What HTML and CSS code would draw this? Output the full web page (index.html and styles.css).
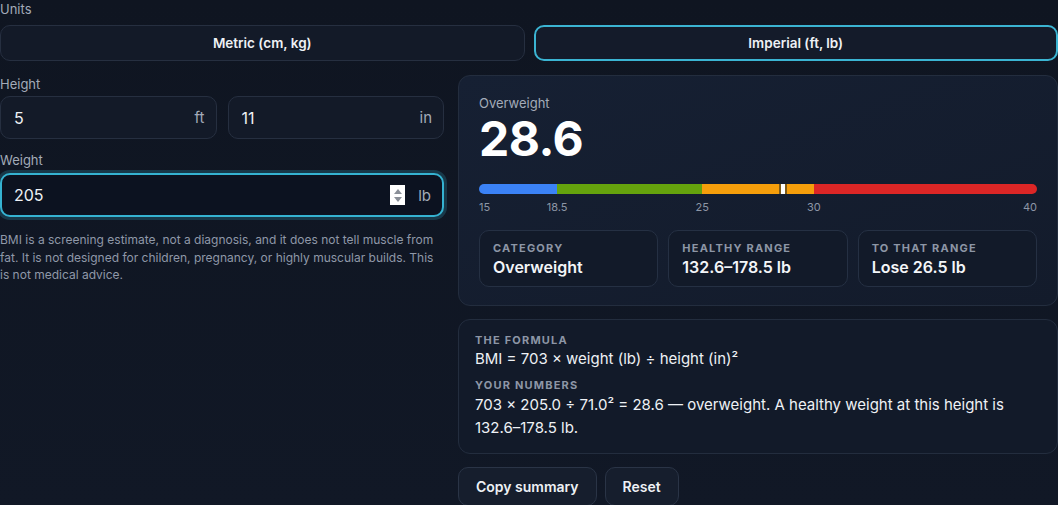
FILE: index.html
```html
<!DOCTYPE html>
<html lang="en">
<head>
<meta charset="utf-8">
<title>BMI Calculator</title>
<link rel="stylesheet" href="styles.css">
</head>
<body>
<div class="app">
  <div class="field-label">Units</div>
  <div class="units">
    <button class="unit-btn">Metric (cm, kg)</button>
    <button class="unit-btn active">Imperial (ft, lb)</button>
  </div>

  <div class="main">
    <div class="inputs">
      <div class="field-label">Height</div>
      <div class="pair">
        <div class="input"><span class="val">5</span><span class="suffix">ft</span></div>
        <div class="input"><span class="val">11</span><span class="suffix">in</span></div>
      </div>
      <div class="field-label weight-label">Weight</div>
      <div class="input focused">
        <span class="val">205</span>
        <span class="spinner"><span class="up"></span><span class="down"></span></span>
        <span class="suffix">lb</span>
      </div>
      <p class="note">BMI is a screening estimate, not a diagnosis, and it does not tell muscle from fat. It is not designed for children, pregnancy, or highly muscular builds. This is not medical advice.</p>
    </div>

    <div class="results">
      <section class="card result">
        <div class="cat-label">Overweight</div>
        <div class="bmi">28.6</div>
        <div class="scale">
          <div class="bar">
            <span class="seg blue"></span>
            <span class="seg green"></span>
            <span class="seg orange"></span>
            <span class="seg red"></span>
            <span class="marker" style="left:54.4%"></span>
          </div>
          <div class="ticks">
            <span class="tick first" style="left:0%">15</span>
            <span class="tick" style="left:14%">18.5</span>
            <span class="tick" style="left:40%">25</span>
            <span class="tick" style="left:60%">30</span>
            <span class="tick last" style="left:100%">40</span>
          </div>
        </div>
        <div class="stats">
          <div class="stat"><div class="stat-label">Category</div><div class="stat-value">Overweight</div></div>
          <div class="stat"><div class="stat-label">Healthy range</div><div class="stat-value">132.6–178.5 lb</div></div>
          <div class="stat"><div class="stat-label">To that range</div><div class="stat-value">Lose 26.5 lb</div></div>
        </div>
      </section>

      <section class="card formula">
        <div class="stat-label">The formula</div>
        <div class="formula-text">BMI = 703 × weight (lb) ÷ height (in)²</div>
        <div class="stat-label second">Your numbers</div>
        <div class="formula-text">703 × 205.0 ÷ 71.0² = 28.6 — overweight. A healthy weight at this height is 132.6–178.5 lb.</div>
      </section>

      <div class="actions">
        <button class="btn">Copy summary</button>
        <button class="btn">Reset</button>
      </div>
    </div>
  </div>
</div>
</body>
</html>
```

FILE: styles.css
```css
* { box-sizing: border-box; }
html, body { margin: 0; padding: 0; }
body {
  background: linear-gradient(180deg, #0f1521 0%, #111826 100%);
  font-family: Inter, "Noto Sans", "Liberation Sans", sans-serif;
  color: #e6e9ef;
  min-height: 505px;
  overflow: hidden;
}
.app { width: 1058px; }

.field-label {
  font-size: 13px;
  line-height: 18px;
  color: #a3abb8;
  margin-bottom: 7px;
}

.units {
  display: grid;
  grid-template-columns: 1fr 1fr;
  gap: 9px;
}
.unit-btn {
  height: 36px;
  background: #131a28;
  border: 1px solid #262f40;
  border-radius: 10px;
  color: #eef1f5;
  font-family: inherit;
  font-size: 13.5px;
  font-weight: 600;
}
.unit-btn.active {
  border: 2px solid #3bb4d2;
  background: #141b2a;
}

.main {
  display: grid;
  grid-template-columns: 444px 1fr;
  gap: 14px;
  margin-top: 14px;
}
.inputs .field-label { margin-bottom: 3px; }
.inputs .weight-label { margin-top: 12px; margin-bottom: 4px; }

.pair {
  display: grid;
  grid-template-columns: 1fr 1fr;
  gap: 11px;
}
.input {
  height: 43px;
  display: flex;
  align-items: center;
  padding: 0 11px 0 13px;
  background: #131a28;
  border: 1px solid #262f40;
  border-radius: 10px;
  font-size: 16px;
}
.input .val { flex: 1; color: #eef1f5; }
.input .suffix { color: #a3abb8; font-size: 15px; }
.input.focused {
  height: 44px;
  background: #0c1220;
  border: 2px solid #35b2d1;
  box-shadow: 0 0 0 3px rgba(53, 178, 209, 0.22);
  padding-left: 12px;
}
.spinner {
  width: 15px;
  height: 20px;
  background: #ffffff;
  margin-right: 13px;
  display: flex;
  flex-direction: column;
  align-items: center;
  justify-content: center;
  gap: 3px;
}
.spinner .up, .spinner .down {
  width: 0; height: 0;
  border-left: 4px solid transparent;
  border-right: 4px solid transparent;
}
.spinner .up { border-bottom: 5px solid #8a8f98; }
.spinner .down { border-top: 5px solid #8a8f98; }

.note {
  margin: 14px 0 0;
  font-size: 12px;
  line-height: 17.5px;
  color: #8f98a8;
}

.results { display: flex; flex-direction: column; }
.card {
  background: linear-gradient(160deg, #162033 0%, #131b2b 100%);
  border: 1px solid #232d3e;
  border-radius: 12px;
}
.result { padding: 18px 20px 18px; }
.cat-label { font-size: 13px; line-height: 18px; color: #a3abb8; }
.bmi {
  font-size: 48px;
  line-height: 53px;
  font-weight: 700;
  color: #ffffff;
  letter-spacing: -0.5px;
}

.scale { margin-top: 19px; }
.bar {
  position: relative;
  display: flex;
  height: 10px;
  border-radius: 5px;
}
.seg { height: 100%; }
.seg.blue { width: 14%; background: #3b82f6; border-radius: 5px 0 0 5px; }
.seg.green { width: 26%; background: #65a30d; }
.seg.orange { width: 20%; background: #f59e0b; }
.seg.red { width: 40%; background: #dc2626; border-radius: 0 5px 5px 0; }
.marker {
  position: absolute;
  top: 0;
  width: 8px;
  height: 10px;
  margin-left: -4px;
  background: #ffffff;
  border-left: 2px solid #7c5a18;
  border-right: 2px solid #7c5a18;
}
.ticks {
  position: relative;
  height: 14px;
  margin-top: 6px;
  font-size: 11px;
  line-height: 14px;
  color: #8d96a6;
}
.tick { position: absolute; transform: translateX(-50%); }
.tick.first { transform: none; }
.tick.last { transform: translateX(-100%); }

.stats {
  display: grid;
  grid-template-columns: repeat(3, 1fr);
  gap: 10px;
  margin-top: 16px;
}
.stat {
  background: #121a29;
  border: 1px solid #253043;
  border-radius: 10px;
  padding: 9px 13px 8px;
}
.stat-label {
  font-size: 11px;
  line-height: 16px;
  font-weight: 700;
  letter-spacing: 1.2px;
  text-transform: uppercase;
  color: #8d96a6;
}
.stat-value {
  font-size: 16px;
  line-height: 22px;
  font-weight: 600;
  color: #f3f5f8;
}

.formula {
  margin-top: 13px;
  padding: 13px 16px 14px;
  background: #121a29;
}
.formula .stat-label { line-height: 15px; }
.formula .second { margin-top: 8px; }
.formula-text { font-size: 15px; line-height: 22px; color: #eef1f5; }
.formula .second + .formula-text { line-height: 23px; }

.actions {
  display: flex;
  gap: 8px;
  margin-top: 13px;
}
.btn {
  height: 39px;
  padding: 0 17px;
  background: #161e2d;
  border: 1px solid #2a3446;
  border-radius: 10px;
  color: #eef1f5;
  font-family: inherit;
  font-size: 14px;
  font-weight: 600;
}
```
